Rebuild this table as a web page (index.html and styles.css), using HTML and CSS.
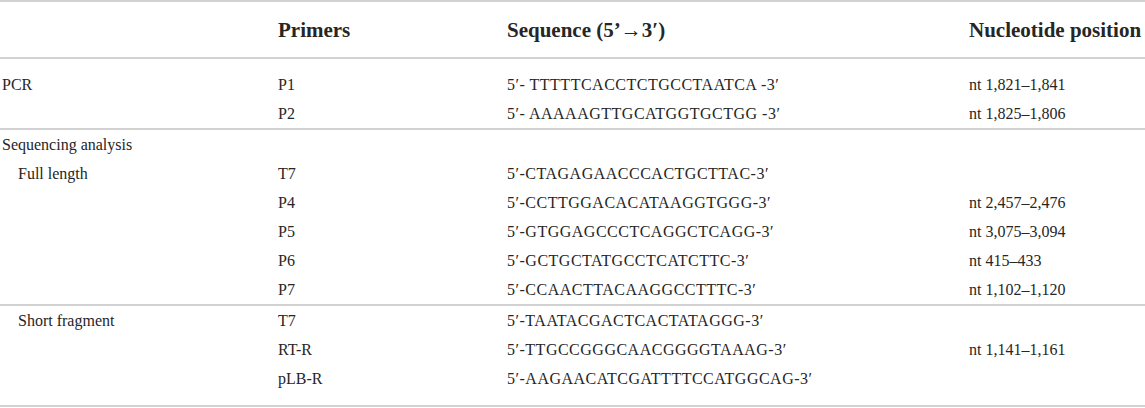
FILE: index.html
```html
<!DOCTYPE html>
<html lang="en">
<head>
<meta charset="utf-8">
<title>Primers</title>
<link rel="stylesheet" href="styles.css">
</head>
<body>
<table class="primers">
  <colgroup>
    <col class="c-group">
    <col class="c-primer">
    <col class="c-seq">
    <col class="c-pos">
  </colgroup>
  <thead>
    <tr>
      <th></th>
      <th>Primers</th>
      <th>Sequence (5’→3′)</th>
      <th>Nucleotide position</th>
    </tr>
  </thead>
  <tbody class="grp grp-first">
    <tr class="first">
      <td>PCR</td><td>P1</td><td>5′- TTTTTCACCTCTGCCTAATCA -3′</td><td>nt 1,821–1,841</td>
    </tr>
    <tr>
      <td></td><td>P2</td><td>5′- AAAAAGTTGCATGGTGCTGG -3′</td><td>nt 1,825–1,806</td>
    </tr>
  </tbody>
  <tbody class="grp">
    <tr>
      <td>Sequencing analysis</td><td></td><td></td><td></td>
    </tr>
    <tr>
      <td class="sub">Full length</td><td>T7</td><td>5′-CTAGAGAACCCACTGCTTAC-3′</td><td></td>
    </tr>
    <tr>
      <td></td><td>P4</td><td>5′-CCTTGGACACATAAGGTGGG-3′</td><td>nt 2,457–2,476</td>
    </tr>
    <tr>
      <td></td><td>P5</td><td>5′-GTGGAGCCCTCAGGCTCAGG-3′</td><td>nt 3,075–3,094</td>
    </tr>
    <tr>
      <td></td><td>P6</td><td>5′-GCTGCTATGCCTCATCTTC-3′</td><td>nt 415–433</td>
    </tr>
    <tr>
      <td></td><td>P7</td><td>5′-CCAACTTACAAGGCCTTTC-3′</td><td>nt 1,102–1,120</td>
    </tr>
  </tbody>
  <tbody class="grp grp-last">
    <tr>
      <td class="sub">Short fragment</td><td>T7</td><td>5′-TAATACGACTCACTATAGGG-3′</td><td></td>
    </tr>
    <tr>
      <td></td><td>RT-R</td><td>5′-TTGCCGGGCAACGGGGTAAAG-3′</td><td>nt 1,141–1,161</td>
    </tr>
    <tr class="last">
      <td></td><td>pLB-R</td><td>5′-AAGAACATCGATTTTCCATGGCAG-3′</td><td></td>
    </tr>
  </tbody>
</table>
</body>
</html>
```

FILE: styles.css
```css
html, body {
  margin: 0;
  padding: 0;
  background: #ffffff;
}

.primers {
  width: 1145px;
  table-layout: fixed;
  border-collapse: collapse;
  font-family: "Liberation Serif", "Times New Roman", serif;
  color: #262626;
  border-top: 2px solid #d2d2d2;
  border-bottom: 2px solid #d2d2d2;
}

.c-group { width: 278px; }
.c-primer { width: 229px; }
.c-seq { width: 462px; }
.c-pos { width: 176px; }

.primers th {
  font-size: 21px;
  font-weight: bold;
  text-align: left;
  white-space: nowrap;
  height: 55px;
  padding: 0;
  line-height: 24px;
  vertical-align: middle;
  border-bottom: 2px solid #d2d2d2;
}

.primers td {
  font-size: 16px;
  line-height: 19px;
  padding: 5px 0;
  white-space: nowrap;
  vertical-align: middle;
}

.primers td:first-child {
  padding-left: 2px;
}

.primers td:nth-child(3) {
  letter-spacing: 0.5px;
}

.primers td.sub {
  padding-left: 18px;
}

.grp {
  border-bottom: 2px solid #d2d2d2;
}

.grp-first tr.first td {
  padding-top: 16px;
}

.grp-last tr.last td {
  padding-bottom: 17px;
}
```
